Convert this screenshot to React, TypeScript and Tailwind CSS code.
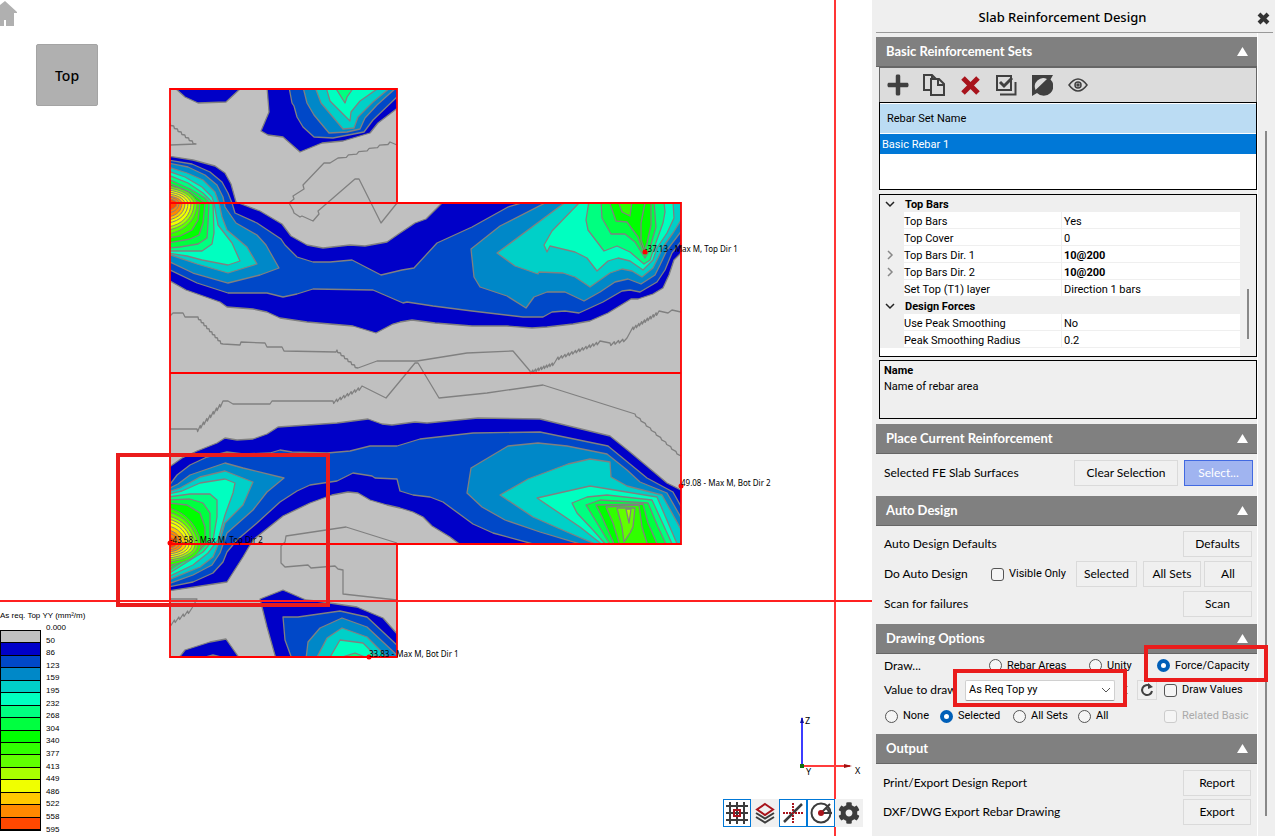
import React, { useState } from 'react';
import { FaPlus, FaCog } from 'react-icons/fa';

type Point = [number, number];

const COLORS = [
  '#c0c0c0', '#0000c8', '#0048c8', '#0088c8', '#00d0c8', '#00ffc0', '#00ff80', '#00ff40',
  '#00ff00', '#30ff00', '#60ff00', '#a8ff00', '#f0ff00', '#ffc800', '#ff8800', '#ff4800',
];

const LEGEND_LABELS = [
  '0.000', '50', '86', '123', '159', '195', '232', '268', '304',
  '340', '377', '413', '449', '486', '522', '558', '595',
];

const SLAB = 'M170 89H397V203H681V544H397V657H170Z';

// Filled contour bands, [colour index, path], painted lowest value first
const BANDS: [number, string][] = [
  // top edge, left
  [1, 'M176 89L185 97L198 103L226 102L240 89Z'],
  // top edge, right
  [1, 'M267 87L269 112L261 131L268 135L283 137L300 152L322 143L343 141L370 133L378 123L399 107V87Z'],
  [2, 'M289 87L292 103L294 106L297 117L303 127L314 137L333 138L364 132L373 120L399 95V87Z'],
  [3, 'M303 87L307 103L314 115L329 133L347 132L360 129L365 118L377 105L397 87Z'],
  [4, 'M315 87L321 103L343 129L354 128L358 117L373 102L391 87Z'],
  [5, 'M326 87L330 101L350 121L351 112L360 101L380 87Z'],
  [6, 'M335 87L345 103L347 97L354 87Z'],
  // upper span
  [1, 'M168 156L193 160L215 166L225 173L231 184L236 202L260 211L282 224L291 236L307 245L323 248L350 245L365 246L387 242L400 233L415 223L426 219L442 203V201H683V251L674 260L669 275L663 288L653 294L638 299L631 299L608 313L590 321L573 324L547 327L532 328L507 326L472 326L435 323L412 320L400 322L393 324L376 333L353 326L307 322L280 318L267 312L253 309L227 307L220 302L186 290L168 280Z'],
  [2, 'M168 160L192 164L210 172L222 182L228 193L232 203L235 213L257 223L281 239L285 245L297 257L313 262L330 262L352 260L381 275L402 270L414 268L437 243L472 227L508 207L525 202H683V239L672 253L665 270L657 282L640 292L630 290L622 291L603 302L579 313L565 311L552 312L543 317L523 317L472 311L433 306L407 302L403 303L373 290L313 289L297 294L283 297L267 293L228 293L197 283L168 269Z'],
  [3, 'M168 163L188 167L205 175L217 185L223 197L225 207L236 223L257 235L266 245L279 268L260 275L228 283L193 273L168 261Z'],
  [4, 'M168 167L187 173L203 180L215 192L219 203L222 217L227 230L247 247L257 264L228 273L197 264L168 254Z'],
  [5, 'M168 171L185 177L202 187L212 197L214 203L218 225L232 243L240 261L228 265L202 260L187 256L168 253Z'],
  [6, 'M168 175L188 183L203 193L213 203L214 233L212 244L202 251L168 251Z'],
  [7, 'M168 179L190 189L205 198L209 203L208 223L207 238L198 244L180 247L168 248Z'],
  [8, 'M168 183L190 192L205 203L203 223L199 235L190 239L168 243Z'],
  [9, 'M168 186L188 195L200 203L198 220L192 230L180 236L168 238Z'],
  [3, 'M549 201L500 226L471 249L474 277L480 287L507 296L526 308L534 297L547 292L565 292L584 301L600 292L615 282L628 279L641 284L655 275L660 265L667 250L683 229V201Z'],
  [4, 'M567 201L497 253L515 266L538 274L539 272L563 273L575 277L590 287L610 273L622 269L632 271L642 277L653 268L658 258L663 247L673 233L683 217V201Z'],
  [5, 'M581 201L552 231L544 245L547 252L550 246L575 252L587 258L597 271L608 261L618 258L630 261L643 270L653 260L657 248L667 233L674 218L673 201Z'],
  [6, 'M589 201L586 220L588 230L604 251L617 246L630 252L644 264L650 260L655 245L663 223L665 212L664 201Z'],
  [7, 'M601 201L602 218L611 234L625 234L635 242L645 258L649 251L656 227L654 201Z'],
  [8, 'M609 201L616 221L627 222L638 237L644 253L647 243L651 225L651 201Z'],
  [9, 'M618 201L622 212L630 216L632 201Z'],
  // lower span
  [1, 'M168 468L182 458L197 451L217 443L225 438L237 440L253 439L267 434L278 427L337 423L368 419L382 424L392 425L415 422L427 423L478 418L540 419L610 436L630 452L667 483L683 491V546H462L450 537L432 526L423 517L413 512L400 508L387 505L370 500L358 493L348 492L332 495L310 503L283 516L253 540L243 557L227 582L168 591Z'],
  [2, 'M168 487L177 475L190 465L207 457L227 452L243 454L270 453L280 450L292 452L327 453L350 451L370 446L397 446L420 439L473 433L540 432L608 446L647 478L673 492L683 510V546L533 544L493 533L473 524L443 502L430 497L413 495L400 491L397 479L375 478L372 476L353 473L337 481L310 485L297 491L280 502L257 523L237 540L227 552L223 562L213 573L193 582L168 587Z'],
  [3, 'M168 489L178 484L190 475L225 463L243 468L284 478L267 492L253 510L227 533L220 553L212 565L193 575L168 584Z'],
  [4, 'M168 492L180 488L200 477L225 471L253 482L243 505L225 523L220 540L213 557L200 567L168 580Z'],
  [5, 'M168 494L182 491L200 483L225 479L235 483L233 493L225 515L218 540L208 553L193 565L168 577Z'],
  [6, 'M168 497L190 494L210 494L217 500L217 517L213 540L203 552L168 574Z'],
  [7, 'M168 500L190 499L203 503L210 513L210 540L198 552L168 571Z'],
  [8, 'M168 503L187 505L200 513L205 527L205 543L190 555L168 568Z'],
  [3, 'M587 546L540 532L505 520L482 507L467 493L471 468L508 446L538 443L567 446L607 454L627 470L640 482L667 493L683 521V546Z'],
  [4, 'M600 546L567 532L533 517L500 495L528 479L568 464L590 459L610 462L611 477L627 486L662 495L683 533V546Z'],
  [5, 'M604 546L580 527L537 498L590 486L657 497L678 546Z'],
  [6, 'M607 546L593 530L577 513L572 503L587 497L607 495L652 500L673 546Z'],
  [7, 'M611 546L597 523L586 505L600 500L648 503L658 527L667 546Z'],
  [8, 'M615 546L602 517L596 505L643 504L648 523L658 546Z'],
  [9, 'M620 546L613 523L606 507L639 505L642 527L648 546Z'],
  [10, 'M624 542L622 527L617 508L635 508L633 527L630 533Z'],
  [11, 'M626 509L631 509L629 523Z'],
  // bottom edge
  [1, 'M178 659L185 650L210 642L226 639L240 659Z'],
  [2, 'M198 659L213 655L229 659Z'],
  [1, 'M276 659L267 627L260 599L283 590L306 600L316 601L357 607L383 618L399 636V659Z'],
  [2, 'M292 659L285 640L283 617L298 617L340 611L367 617L399 647V659Z'],
  [3, 'M306 659L308 642L320 628L342 618L367 627L399 657V659Z'],
  [4, 'M316 659L327 638L342 628L367 637L389 659Z'],
  [5, 'M329 659L340 640L363 643L379 659Z'],
  [6, 'M336 659L355 653L370 659Z'],
];

// Peaks at the columns: [colour index, centre y, reach right, reach up, reach down]
const PEAKS: [number, number, number, number, number][] = [
  [10, 203, 27, 17, 31],
  [11, 203, 24, 15, 27],
  [12, 203, 21, 13, 24],
  [12, 203, 18, 11, 20],
  [13, 203, 15, 9, 17],
  [14, 203, 12, 7, 14],
  [14, 203, 9, 6, 10],
  [15, 203, 7, 4, 7],
  [9, 544, 31, 36, 21],
  [10, 544, 28, 32, 18],
  [11, 544, 25, 28, 16],
  [12, 544, 22, 25, 14],
  [12, 544, 19, 22, 12],
  [13, 544, 16, 18, 10],
  [14, 544, 12, 14, 8],
  [14, 544, 9, 11, 6],
  [15, 544, 6, 7, 4],
];

const peakPath = (y: number, rx: number, up: number, down: number) =>
  `M168 ${y - up}C${170 + rx * 0.5} ${y - up * 0.9} ${170 + rx * 0.9} ${y - up * 0.5} ${170 + rx} ${y}` +
  `C${170 + rx} ${y + down * 0.5} ${170 + rx * 0.6} ${y + down * 0.9} 168 ${y + down}Z`;

// Toothed line between two points, as the zero contour runs along the mesh
const saw = ([x1, y1]: Point, [x2, y2]: Point, teeth: number) => {
  let d = '';
  for (let i = 0; i < teeth; i++) {
    const x = x1 + ((x2 - x1) * (i + 1)) / teeth;
    const y = y1 + ((y2 - y1) * (i + 1)) / teeth;
    const px = x1 + ((x2 - x1) * i) / teeth;
    const py = y1 + ((y2 - y1) * i) / teeth;
    d += `L${px + (x - px) * 0.2} ${py + 2.5}L${x} ${y}`;
  }
  return d;
};

const ZERO_LINES = [
  'M170 123' + saw([170, 123], [196, 144], 7) + 'L170 145',
  'M397 145L390 142' + saw([390, 142], [338, 158], 5) + 'L330 163L324 163L303 185L304 189L293 196L294 199L289 203L293 210L294 213L300 217L302 216L313 221L319 214L318 211L355 179L359 179L381 223L397 203',
  'M170 316L173 313L183 313L185 317L198 317' + saw([198, 317], [223, 344], 9) + 'L240 345L241 342L265 343L267 347L282 347L284 351L336 352L337 350' +
    saw([337, 350], [358, 368], 6) + 'L377 361L417 361L467 353L513 351L530 371' + saw([530, 371], [555, 362], 9) + 'L558 357' +
    saw([558, 357], [600, 341], 12) + 'L610 343' + saw([610, 343], [627, 338], 4) + 'L633 327' + saw([633, 327], [659, 311], 9) + 'L668 313L672 310L681 312',
  'M170 429L197 429' + saw([197, 429], [223, 401], 8) + 'L228 401L233 404L270 404L272 401L333 401' + saw([333, 401], [362, 386], 8) +
    'L386 398L415 363L418 363L439 398L487 393L543 385L635 414' + saw([635, 414], [681, 456], 9),
  'M397 543L346 527L286 536L285 542L281 546V563L285 567L308 565L311 568L335 566L338 569L343 570L343 594L397 600',
  'M170 623' + saw([170, 623], [192, 608], 5) + 'L197 599L170 599',
  'M645 203L641 223L641 240L645 251',
];

const MARKERS = [
  { x: 645, y: 252, text: '-37.13 - Max M, Top Dir 1' },
  { x: 681, y: 486, text: '49.08 - Max M, Bot Dir 2' },
  { x: 170, y: 543, text: '-43.58 - Max M, Top Dir 2' },
  { x: 369, y: 657, text: '33.83 - Max M, Bot Dir 1' },
];

const PROPERTIES = [
  { group: 'Top Bars' },
  { name: 'Top Bars', value: 'Yes' },
  { name: 'Top Cover', value: '0' },
  { name: 'Top Bars Dir. 1', value: '10@200', nested: true },
  { name: 'Top Bars Dir. 2', value: '10@200', nested: true },
  { name: 'Set Top (T1) layer', value: 'Direction 1 bars' },
  { group: 'Design Forces' },
  { name: 'Use Peak Smoothing', value: 'No' },
  { name: 'Peak Smoothing Radius', value: '0.2' },
];

const SlabDrawing: React.FC = () => (
  <svg className="block h-full w-full" viewBox="0 0 872 836" preserveAspectRatio="xMinYMin meet">
    <defs>
      <clipPath id="slab">
        <path d={SLAB} />
      </clipPath>
    </defs>
    <g clipPath="url(#slab)" stroke="#808080" strokeLinejoin="round">
      <path d={SLAB} fill={COLORS[0]} stroke="none" />
      {BANDS.map(([color, d], i) => (
        <path key={i} d={d} fill={COLORS[color]} strokeWidth="1.3" />
      ))}
      {PEAKS.map(([color, y, rx, up, down], i) => (
        <path key={i} d={peakPath(y, rx, up, down)} fill={COLORS[color]} />
      ))}
      {ZERO_LINES.map((d, i) => (
        <path key={i} d={d} fill="none" strokeWidth="1.3" />
      ))}
    </g>
    <path d={SLAB + 'M170 203H397M170 373H681M170 544H397'} fill="none" stroke="#ff0000" strokeWidth="1.8" />
    <path d="M0 601H872M835 0V836" stroke="#ff2020" strokeWidth="1.8" />
    {MARKERS.map((m) => (
      <g key={m.text}>
        <circle cx={m.x} cy={m.y} r="2.5" fill="#ff0000" />
        <text x={m.x} y={m.y} fontSize="8" className="font-['Noto_Sans',sans-serif]">{m.text}</text>
      </g>
    ))}
    <rect x="118" y="455" width="210" height="150" fill="none" stroke="#ea1c1c" strokeWidth="4" />
    {/* Axis triad */}
    <path d="M802 766V718" stroke="#3c3cff" strokeWidth="2" />
    <path d="M802 766H850" stroke="#ff3c3c" strokeWidth="2" />
    <path d="M800 723L802 717L804 723Z" fill="#1010a0" />
    <path d="M844 764L852 766L844 768Z" fill="#a01010" />
    <rect x="800" y="764" width="4" height="4" fill="#107010" />
    <g fontSize="9" className="font-['Noto_Sans',sans-serif]">
      <text x="805" y="724">Z</text>
      <text x="806" y="775">Y</text>
      <text x="855" y="774">X</text>
    </g>
  </svg>
);

const Legend: React.FC = () => (
  <div className="absolute bottom-0 left-0 font-['Liberation_Sans',sans-serif] text-[8px] leading-3">
    <p>As req. Top YY (mm²/m)</p>
    <div className="flex gap-[5px]">
      <div className="mt-2 mb-[5px] flex w-[41px] flex-col border border-black">
        {COLORS.map((c) => (
          <div key={c} className="flex-1 border-b border-black" style={{ backgroundColor: c }} />
        ))}
      </div>
      <div className="flex h-[214px] flex-col">
        {LEGEND_LABELS.map((l) => (
          <span key={l} className="flex-1">{l}</span>
        ))}
      </div>
    </div>
  </div>
);

const ViewTools: React.FC = () => {
  const base = 'flex h-7 w-7 items-center justify-center border';
  const on = `${base} border-[#0078d7] bg-white`;
  const off = `${base} border-transparent`;
  return (
    <div className="absolute right-[9px] bottom-[9px] flex bg-[#f0f0f0]">
      <button className={on} aria-label="Grid">
        <svg width="24" height="24" viewBox="0 0 24 24" fill="none" stroke="#3c3c3c" strokeWidth="2">
          <path d="M5 1V23M12 1V23M19 1V23M1 5H23M1 12H23M1 19H23" />
          <rect x="9" y="9" width="6" height="6" stroke="#a8141c" />
        </svg>
      </button>
      <button className={off} aria-label="Layers">
        <svg width="22" height="22" viewBox="0 0 22 22" fill="none" strokeWidth="2">
          <path d="M11 2L19 7.500L11 13L3 7.500Z" stroke="#a8141c" />
          <path d="M2 11L11 16.500L20 11M2 15L11 20.500L20 15" stroke="#3c3c3c" />
        </svg>
      </button>
      <button className={on} aria-label="Snap">
        <svg width="24" height="24" viewBox="0 0 24 24" fill="none">
          <path d="M3 21L21 3" stroke="#3c3c3c" strokeWidth="2.500" />
          <path d="M12 2V22M2 12H22" stroke="#a8141c" strokeWidth="2" strokeDasharray="2 1" />
        </svg>
      </button>
      <button className={on} aria-label="Orbit">
        <svg width="24" height="24" viewBox="0 0 24 24" fill="none" stroke="#3c3c3c" strokeWidth="2">
          <circle cx="12" cy="12" r="9.500" />
          <path d="M12 12L21 3M12 12H23M17 7Q20 9 20 12" />
          <circle cx="12" cy="12" r="3" fill="#a8141c" stroke="none" />
        </svg>
      </button>
      <button className={off} aria-label="Settings">
        <FaCog size={22} color="#3c3c3c" />
      </button>
    </div>
  );
};

const Section: React.FC<{ title: string; children: React.ReactNode }> = ({ title, children }) => (
  <section>
    <h2 className="flex h-[30px] items-center justify-between border-b border-[#666] bg-[#808080] pr-[9px] pl-[10px] text-[13px] font-bold text-white">
      <span>{title}</span>
      <svg width="11" height="9" viewBox="0 0 11 9" fill="#fff">
        <path d="M5.500 0L11 9H0Z" />
      </svg>
    </h2>
    {children}
  </section>
);

const Button: React.FC<{ className: string; children: React.ReactNode }> = ({ className, children }) => (
  <button className={`h-[26px] border text-center whitespace-nowrap ${className}`}>{children}</button>
);

const plain = 'border-[#dadada] bg-[#f0f0f0]';
const tool = 'flex h-full w-9 items-center justify-center';
const small = "font-['Roboto','Noto_Sans',sans-serif] text-[11px]";
const radioStyle =
  'h-[13px] w-[13px] shrink-0 appearance-none rounded-full border border-[#555] bg-[#f5f5f5] checked:border-4 checked:border-[#005fb8] checked:bg-white';
const checkStyle =
  'h-[13px] w-[13px] shrink-0 appearance-none rounded-[3px] border border-[#555] bg-[#f5f5f5] checked:bg-[#005fb8] disabled:border-[#ccc]';

const DesignPanel: React.FC = () => {
  const [draw, setDraw] = useState('Force/Capacity');
  const [scope, setScope] = useState('Selected');
  const [value, setValue] = useState('As Req Top yy');

  const radio = (name: string, label: string, current: string, set: (v: string) => void, width: string) => (
    <label className={`flex shrink-0 items-center gap-[5px] ${width}`}>
      <input type="radio" name={name} className={radioStyle} checked={current === label} onChange={() => set(label)} />
      <span className="pt-px whitespace-nowrap">{label}</span>
    </label>
  );

  return (
    <aside className="flex w-[403px] shrink-0 flex-col bg-[#efefef] pl-1 font-['Lato','Noto_Sans',sans-serif] text-[12px] text-black">
      <header className="mr-0.5 flex h-[33px] items-center border-b border-[#999] pt-1 pr-[3px]">
        <h1 className="flex-1 pr-2 text-center font-['Noto_Sans',sans-serif] text-[13px] font-medium">Slab Reinforcement Design</h1>
        <button aria-label="Close">
          <svg width="13" height="13" viewBox="0 0 13 13" stroke="#333" strokeWidth="4">
            <path d="M2 2L11 11M11 2L2 11" />
          </svg>
        </button>
      </header>

      <div className="flex flex-1">
        <div className="w-[382px] border-r border-white pt-1">
          <Section title="Basic Reinforcement Sets">
            <div className="ml-[3px]">
              <div className="flex h-[35px] items-center border border-b-0 border-[#666] bg-[#dcdcdc]">
                <button aria-label="Add" className={tool}><FaPlus size={24} color="#404040" /></button>
                <button aria-label="Copy" className={tool}>
                  <svg width="22" height="22" viewBox="0 0 22 22" fill="none" stroke="#404040" strokeWidth="2">
                    <path d="M7 16H1V1H9L13 5M9 1V5" />
                    <path d="M8 5H16L21 10V21H8ZM15 5V11H21" />
                  </svg>
                </button>
                <button aria-label="Delete" className={tool}>
                  <svg width="19" height="19" viewBox="0 0 19 19" stroke="#a8141c" strokeWidth="5">
                    <path d="M2 2L17 17M17 2L2 17" />
                  </svg>
                </button>
                <button aria-label="Check all" className={tool}>
                  <svg width="21" height="21" viewBox="0 0 21 21" fill="none" stroke="#404040">
                    <path d="M1 1H15V15H1Z" strokeWidth="2" />
                    <path d="M4 19.500H19.500V7" strokeWidth="2" />
                    <path d="M4 7L8 11L16 3" strokeWidth="3" />
                  </svg>
                </button>
                <button aria-label="Invert" className={tool}>
                  <svg width="21" height="21" viewBox="0 0 21 21" fill="#404040">
                    <path d="M0 0H21L18.500 4.500A9 9 0 0 1 5 18L0 21Z" />
                    <path d="M15 4L3.500 15A8.500 8.500 0 0 1 15 4Z" fill="#dcdcdc" />
                  </svg>
                </button>
                <button aria-label="Show" className={tool}>
                  <svg width="20" height="14" viewBox="0 0 20 14" fill="none" stroke="#404040" strokeWidth="1.500">
                    <path d="M1 7Q10 -5 19 7Q10 19 1 7Z" />
                    <circle cx="10" cy="7" r="3" />
                    <circle cx="10" cy="7" r="1" />
                  </svg>
                </button>
              </div>
              <div className={`h-[88px] border border-black bg-white pt-px ${small}`}>
                <table className="w-full">
                  <thead>
                    <tr>
                      <th className="h-[29px] border-b border-white bg-[#bbdcf3] p-0 pt-0.5 pl-[7px] text-left font-normal">Rebar Set Name</th>
                    </tr>
                  </thead>
                  <tbody>
                    <tr>
                      <td className="h-[21px] bg-[#0078d7] p-0 pt-0.5 pl-0.5 text-white">Basic Rebar 1</td>
                    </tr>
                  </tbody>
                </table>
              </div>

              <div className={`mt-1 flex h-[163px] items-start border border-black bg-white ${small}`}>
                <table className="w-[360px] table-fixed border-separate border-spacing-0 leading-[13px]">
                  <colgroup>
                    <col className="w-6" />
                    <col className="w-[158px]" />
                    <col />
                  </colgroup>
                  <tbody>
                    {PROPERTIES.map((p, i) =>
                      p.group ? (
                        <tr key={i} className="h-[17px] bg-[#efefef] font-bold">
                          <td className="p-0">
                            <svg width="20" height="16" viewBox="0 0 20 16" fill="none" stroke="#222" strokeWidth="1.500">
                              <path d="M6 6L10 10L14 6" />
                            </svg>
                          </td>
                          <td colSpan={2} className="p-0 pt-0.5 pl-px">{p.group}</td>
                        </tr>
                      ) : (
                        <tr key={i} className="h-[17px]">
                          <td className="bg-[#efefef] p-0">
                            {p.nested && (
                              <svg width="20" height="16" viewBox="0 0 20 16" fill="none" stroke="#888" strokeWidth="1.500">
                                <path d="M8 4L12 8L8 12" />
                              </svg>
                            )}
                          </td>
                          <td className="border-r border-b border-[#efefef] p-0 pt-[3px]">{p.name}</td>
                          <td className={`border-b border-[#efefef] p-0 pt-[3px] pl-0.5 ${p.nested ? 'font-bold' : ''}`}>{p.value}</td>
                        </tr>
                      )
                    )}
                  </tbody>
                </table>
                <div className="h-full flex-1 bg-[#efefef] pt-[94px] pl-[7px]">
                  <div className="h-[50px] w-0.5 bg-[#888]" />
                </div>
              </div>

              <div className={`mt-[3px] h-[59px] border border-black px-1 pt-0.5 ${small}`}>
                <p className="leading-4 font-bold">Name</p>
                <p className="leading-4">Name of rebar area</p>
              </div>
            </div>
          </Section>

          <div className="mt-[5px]">
            <Section title="Place Current Reinforcement">
              <div className="flex h-[42px] items-center pr-1 pb-1 pl-2">
                <span className="flex-1">Selected FE Slab Surfaces</span>
                <Button className={`w-[104px] ${plain}`}>Clear Selection</Button>
                <Button className="ml-1.5 w-[69px] border-[#4169e1] bg-[#a0b4f0] text-white">Select...</Button>
              </div>
            </Section>
          </div>

          <Section title="Auto Design">
            <div className="flex flex-col gap-1 pt-[5px] pr-[5px] pb-[7px] pl-2">
              <div className="flex items-center justify-between">
                <span>Auto Design Defaults</span>
                <Button className={`w-[69px] ${plain}`}>Defaults</Button>
              </div>
              <div className="flex items-center">
                <span className="w-[107px]">Do Auto Design</span>
                <label className={`flex flex-1 items-center gap-[5px] ${small}`}>
                  <input type="checkbox" className={checkStyle} />
                  <span className="pt-px">Visible Only</span>
                </label>
                <Button className={`w-[61px] ${plain}`}>Selected</Button>
                <Button className={`ml-1.5 w-[58px] ${plain}`}>All Sets</Button>
                <Button className={`ml-[3px] w-12 ${plain}`}>All</Button>
              </div>
              <div className="flex items-center justify-between">
                <span>Scan for failures</span>
                <Button className={`w-[69px] ${plain}`}>Scan</Button>
              </div>
            </div>
          </Section>

          <Section title="Drawing Options">
            <div className={`flex h-20 flex-col pl-2 ${small}`}>
              <div className="flex h-[23px] items-center">
                <span className="w-[105px] font-['Lato',sans-serif] text-[12px]">Draw...</span>
                {radio('draw', 'Rebar Areas', draw, setDraw, 'w-[100px]')}
                {radio('draw', 'Unity', draw, setDraw, 'w-[68px]')}
                <div className="relative">
                  {radio('draw', 'Force/Capacity', draw, setDraw, 'w-[94px]')}
                  <div className="pointer-events-none absolute -top-3 -left-[13px] h-[37px] w-[124px] border-4 border-[#ea1c1c]" />
                </div>
              </div>
              <div className="flex h-[26px] items-center">
                <label htmlFor="value" className="w-[81px] font-['Lato',sans-serif] text-[12px] whitespace-nowrap">Value to draw</label>
                <div className="relative w-[150px]">
                  <select
                    id="value"
                    value={value}
                    onChange={(e) => setValue(e.target.value)}
                    className="relative z-10 block h-[21px] w-full appearance-none rounded-[2px] border border-[#d0d0d0] border-b-[#999] bg-white pt-px pl-[3px]"
                  >
                    <option>As Req Top yy</option>
                    <option>As Req Top xx</option>
                  </select>
                  <svg className="pointer-events-none absolute top-[7px] right-1 z-10" width="10" height="7" viewBox="0 0 10 7" fill="none" stroke="#555">
                    <path d="M1 1L5 5L9 1" />
                  </svg>
                  <div className="pointer-events-none absolute -top-[11px] -left-3 h-[38px] w-[174px] border-4 border-[#ea1c1c] bg-[#efefef]" />
                </div>
                <svg className="ml-[5px]" width="12" height="16" viewBox="0 0 12 16" fill="#555">
                  <path d="M2 5L5 2L8 5ZM2 11L5 14L8 11Z" />
                </svg>
                <button aria-label="Refresh" className={`ml-[5px] flex h-5 w-5 items-center justify-center border ${plain}`}>
                  <svg width="14" height="14" viewBox="0 0 14 14" fill="none" stroke="#404040" strokeWidth="2">
                    <path d="M10 3A5 5 0 1 0 12 8" />
                    <path d="M8 0L13 4L8 6Z" fill="#404040" stroke="none" />
                  </svg>
                </button>
                <label className="ml-[7px] flex items-center gap-[5px] whitespace-nowrap">
                  <input type="checkbox" className={checkStyle} />
                  <span className="pt-px">Draw Values</span>
                </label>
              </div>
              <div className="flex h-[26px] items-center pl-px">
                {radio('scope', 'None', scope, setScope, 'w-[55px]')}
                {radio('scope', 'Selected', scope, setScope, 'w-[73px]')}
                {radio('scope', 'All Sets', scope, setScope, 'w-[65px]')}
                {radio('scope', 'All', scope, setScope, 'w-[86px]')}
                <label className="flex items-center gap-[5px] whitespace-nowrap text-[#aaa]">
                  <input type="checkbox" disabled className={checkStyle} />
                  <span className="pt-px">Related Basic</span>
                </label>
              </div>
            </div>
          </Section>

          <Section title="Output">
            <div className="flex flex-col gap-[3px] pt-1.5 pr-[6px] pb-2 pl-[7px]">
              <div className="flex items-center justify-between">
                <span>Print/Export Design Report</span>
                <Button className={`w-[68px] ${plain}`}>Report</Button>
              </div>
              <div className="flex items-center justify-between">
                <span>DXF/DWG Export Rebar Drawing</span>
                <Button className={`w-[68px] ${plain}`}>Export</Button>
              </div>
            </div>
          </Section>
        </div>
        <div className="flex flex-1 flex-col pt-[98px] pb-5 pl-[7px]">
          <div className="w-0.5 flex-1 bg-[#888]" />
        </div>
      </div>
    </aside>
  );
};

export default function App() {
  return (
    <div className="flex min-h-screen overflow-hidden bg-white text-black">
      <main className="relative min-w-0 flex-1">
        <div className="absolute inset-0">
          <SlabDrawing />
        </div>
        <button aria-label="Home" className="absolute top-0 left-0">
          <svg width="17" height="26" viewBox="0 0 17 26" fill="#b0b0b0">
            <path d="M5 1L17 12V13H14V26H6V20H4V26H0V5Z" />
          </svg>
        </button>
        <button className="absolute top-11 left-9 h-[62px] w-[62px] rounded-[2px] border border-[#a4a4a4] bg-[#b0b0b0] font-['Noto_Sans',sans-serif] text-[14px] font-medium">
          Top
        </button>
        <Legend />
        <ViewTools />
      </main>
      <DesignPanel />
    </div>
  );
}
